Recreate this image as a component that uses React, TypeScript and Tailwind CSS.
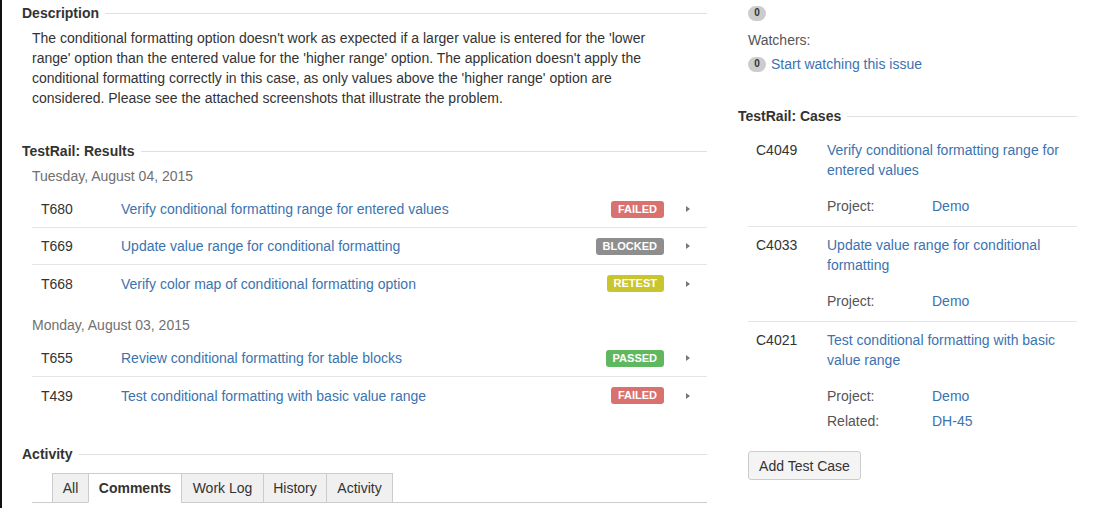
import React from "react";

const LINK = "text-[#3b73af]";

type Result = { id: string; title: string; status: "FAILED" | "BLOCKED" | "RETEST" | "PASSED" };

const STATUS_STYLE: Record<Result["status"], string> = {
  FAILED: "bg-[#d9716f]",
  BLOCKED: "bg-[#8e8e8e]",
  RETEST: "bg-[#c9c52c]",
  PASSED: "bg-[#5fb85f]",
};

const RESULT_GROUPS: { date: string; items: Result[] }[] = [
  {
    date: "Tuesday, August 04, 2015",
    items: [
      { id: "T680", title: "Verify conditional formatting range for entered values", status: "FAILED" },
      { id: "T669", title: "Update value range for conditional formatting", status: "BLOCKED" },
      { id: "T668", title: "Verify color map of conditional formatting option", status: "RETEST" },
    ],
  },
  {
    date: "Monday, August 03, 2015",
    items: [
      { id: "T655", title: "Review conditional formatting for table blocks", status: "PASSED" },
      { id: "T439", title: "Test conditional formatting with basic value range", status: "FAILED" },
    ],
  },
];

const CASES = [
  {
    id: "C4049",
    title: ["Verify conditional formatting range for", "entered values"],
    fields: [{ label: "Project:", value: "Demo" }],
  },
  {
    id: "C4033",
    title: ["Update value range for conditional", "formatting"],
    fields: [{ label: "Project:", value: "Demo" }],
  },
  {
    id: "C4021",
    title: ["Test conditional formatting with basic", "value range"],
    fields: [
      { label: "Project:", value: "Demo" },
      { label: "Related:", value: "DH-45" },
    ],
  },
];

const TABS = [
  { label: "All", w: "w-[37px]" },
  { label: "Comments", w: "w-[94px]" },
  { label: "Work Log", w: "w-[83px]" },
  { label: "History", w: "w-[64px]" },
  { label: "Activity", w: "w-[67px]" },
];

function Heading({ children }: { children: React.ReactNode }) {
  return (
    <div className="flex h-5 items-center gap-[6px]">
      <h2 className="text-[14px] font-bold leading-5 text-[#333]">{children}</h2>
      <div className="h-px flex-1 bg-[#e0e0e0]" />
    </div>
  );
}

function CountBadge() {
  return (
    <span className="inline-flex h-[15px] w-[18px] items-center justify-center rounded-full bg-[#ccc] text-[10px] font-bold leading-none text-[#333]">
      0
    </span>
  );
}

export default function App() {
  return (
    <div
      className="flex h-[508px] w-[1093px] overflow-hidden bg-white text-[14px] leading-5 text-[#333]"
      style={{ fontFamily: '"Liberation Sans", Arial, sans-serif' }}
    >
      <div className="w-[2px] bg-[#111]" />

      {/* Left column */}
      <div className="ml-[20px] w-[685px] pt-[3px]">
        <Heading>Description</Heading>
        <p className="mt-[5px] pl-[10px]">
          The conditional formatting option doesn't work as expected if a larger value is entered for the 'lower
          <br />
          range' option than the entered value for the 'higher range' option. The application doesn't apply the
          <br />
          conditional formatting correctly in this case, as only values above the 'higher range' option are
          <br />
          considered. Please see the attached screenshots that illustrate the problem.
        </p>

        <div className="mt-[33px]">
          <Heading>TestRail: Results</Heading>
        </div>
        <div className="pl-[10px]">
          {RESULT_GROUPS.map((group, gi) => (
            <div key={group.date} className={gi === 0 ? "mt-[5px]" : "mt-[13px]"}>
              <div className="text-[#707070]">{group.date}</div>
              <div className="mt-[5px]">
                {group.items.map((r, idx) => (
                  <div
                    key={r.id}
                    className={`flex h-[37px] items-center ${
                      idx < group.items.length - 1 ? "border-b border-[#e5e5e5]" : ""
                    }`}
                  >
                    <span className="w-[89px] pl-[9px]">{r.id}</span>
                    <span className={`flex-1 ${LINK}`}>{r.title}</span>
                    <span
                      className={`flex h-[17px] items-center rounded-[3px] px-[7px] text-[11px] font-bold leading-none text-white ${
                        STATUS_STYLE[r.status]
                      }`}
                    >
                      {r.status}
                    </span>
                    <span className="ml-[22px] mr-[17px] h-0 w-0 border-y-[3.5px] border-l-[4px] border-y-transparent border-l-[#777]" />
                  </div>
                ))}
              </div>
            </div>
          ))}
        </div>

        <div className="mt-[30px]">
          <Heading>Activity</Heading>
        </div>
        <div className="ml-[10px] mt-[9px] flex border-b border-[#ccc] pl-[20px]">
          {TABS.map((t, i) => {
            const active = t.label === "Comments";
            return (
              <div
                key={t.label}
                className={`-mb-px flex h-[30px] items-center justify-center border border-[#ccc] ${t.w} ${
                  i > 0 ? "-ml-px" : ""
                } ${active ? "border-b-white bg-white font-bold" : "bg-[#f0f0f0]"}`}
              >
                {t.label}
              </div>
            );
          })}
        </div>
      </div>

      {/* Right column */}
      <div className="ml-[31px] w-[339px]">
        <div className="pl-[10px] pt-px">
          <CountBadge />
          <div className="mt-[9px] text-[#555]">Watchers:</div>
          <div className="mt-[4px] flex items-center gap-[5px]">
            <CountBadge />
            <span className={LINK}>Start watching this issue</span>
          </div>
        </div>

        <div className="mt-[32px]">
          <Heading>TestRail: Cases</Heading>
        </div>
        <div className="mt-[6px] pl-[10px]">
          {CASES.map((c, idx) => (
            <div
              key={c.id}
              className={`flex pb-[8px] pt-[8px] ${idx < CASES.length - 1 ? "border-b border-[#e5e5e5]" : ""}`}
            >
              <span className="w-[79px] pl-[8px]">{c.id}</span>
              <div className="flex-1">
                <div className={LINK}>
                  {c.title[0]}
                  <br />
                  {c.title[1]}
                </div>
                <div className="mt-[13px]">
                  {c.fields.map((f) => (
                    <div key={f.label} className="flex h-[25px] items-center">
                      <span className="w-[105px] text-[#555]">{f.label}</span>
                      <span className={LINK}>{f.value}</span>
                    </div>
                  ))}
                </div>
              </div>
            </div>
          ))}
          <button className="mt-[10px] h-[29px] w-[113px] rounded-[3px] border border-[#ccc] bg-[#f4f4f4] text-[14px] text-[#333]">
            Add Test Case
          </button>
        </div>
      </div>
    </div>
  );
}
